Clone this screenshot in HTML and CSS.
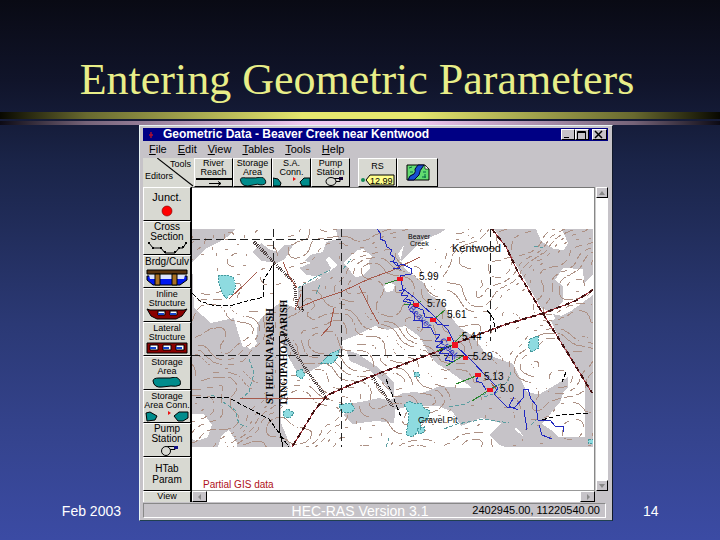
FILE: index.html
```html
<!DOCTYPE html>
<html lang="en">
<head>
<meta charset="utf-8">
<title>Entering Geometric Parameters</title>
<link rel="stylesheet" href="styles.css">
</head>
<body>
<main class="slide">
  <h1 class="title">Entering Geometric Parameters</h1>
  <div class="rule rule-gold"></div>
  <div class="rule rule-lilac"></div>
  <div class="stage">
    <section class="window">
      <header class="titlebar">
        <svg class="app-icon" width="6" height="6" viewBox="0 0 6 6"><path d="M3 0v6M1 3h4" stroke="#b01030" stroke-width="1.4"/></svg>
        <span class="caption">Geometric Data - Beaver Creek near Kentwood</span>
        <button class="ctl" aria-label="Minimize"><svg width="11" height="9" viewBox="0 0 11 9"><path d="M2 7.500h5" stroke="#000"/></svg></button>
        <button class="ctl" aria-label="Maximize"><svg width="11" height="9" viewBox="0 0 11 9"><path d="M1.500 9V1.500h8V9M1 2.500h9" fill="none" stroke="#000"/></svg></button>
        <button class="ctl close" aria-label="Close"><svg width="11" height="9" viewBox="0 0 11 9"><path d="M2 1l7 7M9 1L2 8" stroke="#000" stroke-width="1.500"/></svg></button>
      </header>
      <nav class="menu">
        <a href="#"><u>F</u>ile</a><a href="#"><u>E</u>dit</a><a href="#"><u>V</u>iew</a><a href="#"><u>T</u>ables</a><a href="#"><u>T</u>ools</a><a href="#"><u>H</u>elp</a>
      </nav>
      <div class="toolbar">
        <div class="corner">
          <svg class="slash" viewBox="0 0 50 29" preserveAspectRatio="none"><path d="M14 0L49 28" stroke="#000"/></svg>
          <span class="corner-tools">Tools</span><span class="corner-editors">Editors</span>
        </div>
        <button class="tool"><span>River<br>Reach</span><svg width="36" height="9" viewBox="0 0 36 9"><path d="M0 2h36" stroke="#000" stroke-width="2"/><path d="M13 6.500h12M22 4.500l3 2-3 2" fill="none" stroke="#000"/></svg></button>
        <button class="tool"><span>Storage<br>Area</span><svg width="32" height="9" viewBox="0 0 32 10"><path d="M2 3Q2 0 8 1L19 1 25 0Q31 2 30 7Q27 10 21 8L10 10Q3 10 2 3Z" fill="#008c8c" stroke="#000"/></svg></button>
        <button class="tool"><span>S.A.<br>Conn.</span><svg width="37" height="9" viewBox="0 0 37 9"><path d="M0 1l5 1 3 4-1 3H0ZM27 5l4-4h6v8h-8Z" fill="#008c8c" stroke="#000"/><path d="M20 0v4l3-2z" fill="#e11"/></svg></button>
        <button class="tool"><span>Pump<br>Station</span><svg width="30" height="9" viewBox="0 0 30 9"><path d="M15 1.500h9v3h-5" fill="none" stroke="#000"/><ellipse cx="15" cy="4.500" rx="5" ry="4" fill="#d8d9d2" stroke="#000"/><path d="M23 0h4v3h-4z" fill="#103"/></svg></button>
        <button class="tool rs"><span>RS</span><svg width="36" height="12" viewBox="0 0 36 12"><path d="M6 6l4-5h24v10H10Z" fill="#ffff8c" stroke="#000"/><circle cx="3" cy="6" r="2" fill="#185"/><text class="tag" x="10" y="10">12.99</text></svg></button>
        <button class="tool picture" aria-label="Background picture"><svg width="24" height="17" viewBox="0 0 24 17"><path d="M1 1h18l4 4v11H1Z" fill="#62dc70" stroke="#000"/><path d="M2 16Q3 11 8 10Q10 8 9 5L12 1h6Q13 7 13 11L8 16Z" fill="#164fd0" stroke="#003"/><path d="M19 1l4 4h-4Z" fill="#fff" stroke="#000" stroke-width=".6"/><path d="M3 4l3-1M4 8h3M17 8h3M16 13h4M19 10v4" stroke="#064"/></svg></button>
      </div>
      <div class="work">
        <div class="editors">
          <button class="edit"><span>Junct.</span><svg width="12" height="12" viewBox="0 0 12 12"><circle cx="6" cy="6" r="5" fill="#f00" stroke="#700" stroke-width=".6"/></svg></button>
          <button class="edit"><span>Cross<br>Section</span><svg width="42" height="12" viewBox="0 0 42 12"><path d="M3 1l4 5h8l4 5h10l4-5h4l3-5" fill="none" stroke="#000"/><path d="M2 0h2v2H2zM6 5h2v2H6zM14 5h2v2h-2zM18 9h2v2h-2zM28 9h2v2h-2zM32 5h2v2h-2zM36 4h2v2h-2zM39 0h2v2h-2z"/></svg></button>
          <button class="edit"><span>Brdg/Culv</span><svg width="42" height="17" viewBox="0 0 42 17"><path d="M1 7h40v4l-7 5H7L1 11Z" fill="#0018f0" stroke="#000"/><path d="M3 6h36l-1 4H4Z" fill="#dce4ff"/><path d="M1 1h40v4H1Z" fill="#5b3510" stroke="#000"/><path d="M9 5h5v11H9zM26 5h5v11h-5z" fill="#a97022" stroke="#000"/></svg></button>
          <button class="edit"><span class="small">Inline<br>Structure</span><svg width="42" height="12" viewBox="0 0 42 12"><path d="M1 1l3 1h34l3-1-5 7-6 3H11L5 8Z" fill="#8b0000" stroke="#000"/><path d="M12 3h7v4h-7zM24 3h7v4h-7z" fill="#fff" stroke="#000"/><path d="M12 5h6v2h-6zM24 5h6v2h-6z" fill="#14c"/></svg></button>
          <button class="edit"><span class="small">Lateral<br>Structure</span><svg width="42" height="12" viewBox="0 0 42 12"><path d="M1 1h40v10H1Z" fill="#8b0000" stroke="#000"/><path d="M4 3h8v5H4zM17 3h8v5h-8zM30 3h8v5h-8z" fill="#fff" stroke="#000"/><path d="M4 5h6v2H4zM17 5h6v2h-6zM30 5h6v2h-6z" fill="#14c"/></svg></button>
          <button class="edit"><span class="small">Storage<br>Area</span><svg width="32" height="11" viewBox="0 0 32 11"><path d="M2 4Q2 1 8 1L19 1 25 0Q31 3 29 8Q25 10 20 9L11 10Q3 11 2 4Z" fill="#008c8c" stroke="#000"/></svg></button>
          <button class="edit"><span class="small">Storage<br>Area Conn.</span><svg width="44" height="12" viewBox="0 0 44 12"><path d="M1 3l4-1 7 4-2 4-8 1ZM29 6l5-4h9v6l-5 3h-5Z" fill="#008c8c" stroke="#000"/><path d="M23 1v4l3-2z" fill="#e11"/></svg></button>
          <button class="edit"><span>Pump<br>Station</span><svg width="30" height="11" viewBox="0 0 30 11"><path d="M15 1.500h8v3h-5" fill="none" stroke="#000"/><circle cx="14" cy="6" r="4.500" fill="#d8d9d2" stroke="#000"/><path d="M22 1h4v3h-4z" fill="#118"/></svg></button>
          <button class="edit plain"><span>HTab<br>Param</span></button>
          <button class="edit last"><span class="small">View</span></button>
        </div>
        <div class="view">
          <div class="canvas">
            <svg class="map" viewBox="193 229 401 218" role="img" aria-label="Topographic map of Beaver Creek">
              <rect class="wood" x="193" y="229" width="401" height="218"/>
              <g class="open">
                <path d="M193 262l7-7 8-7 12-6 8-5 8-8h101l2 10-12 3-3 10-13 3-5 6 14 4 10-8 9 8-19 14-21 8v22l-17-7-18 14-5 7-3 24h-12l-5-14-4-15-23 5-17-15Z"/>
                <path d="M345 263l5-6 9-7 5-1 9 7-3 5 1 8-8 7-7 1Z"/>
                <path d="M401 262l12-12 10-9 18-8 6-4h48l13 20 34 59 10 4 12-10v-16l-8-6 8-12 20 1 1 14 9-8v20l-22 16-20 10 14 30 20 30v56H560l-8-7-9-6 18-22 8-22-9 6-14 10-18-4-14-28-27-10-13-18-14-9-11-14-6-11-13-8-4-10-20-15-7-15 6-9Z"/>
                <path d="M193 414h12l8 11-4 12-12 4-4-2ZM219 447l4-12 7-5 8 13v4ZM242 335h14l2 9-7 5-7-5Z"/>
                <path d="M343 341l15-6 18-9 12 4 18-4 14 10 9 16 8 11 13 8 22 16 8 12 14 7 10 14 14 8 8 10 4 9H292l-10-24V340l8 18 8 14 12 0 14-8 20-13Z"/>
                <path d="M537 229h26l6 14-4 7-10-1-13-8ZM385 286l6-4 5 3-2 6-7 1Z"/>
              </g>
              <g class="wood">
                <path d="M253 252l9-9 8 6 8 3 8-7 8 0-8 14-8 4-15-2Z"/>
                <path d="M312 263l14-5 6 10-8 9-16-2-8-7ZM302 367l20-14 20-6-8 14-20 4Z"/>
                <path d="M347 350l12 4 18 12 18 16 0 16-10-15-16-14-18-8Z"/>
                <path d="M350 404l17-3 13-3 17 4-2 21-18-2-24 3-8-9Z"/>
                <path d="M391 400l13-7 14-1 12 5 13 2 2 7-33 0-18 4ZM441 386l21 2 17 0 14 10 10 6 17-14 12 9 21-12 16-10 0 11-14 13-22 18-18 10 14 11 21 4 18 13h-28l-20-6-20-6-10-10 12-12-20-5-20 8-8-14-22-9-19-6Z"/>
                <path d="M434 353l13 6 16 15 9 12 15 13 21-8-8-9-9-14-13-10-8-6-15-12Z"/>
                <path d="M554 314l14 3 12 10 14 4v50l-16-22-14-26Z"/>
              </g>
              <path id="contours" class="contour"/>
              <g class="water">
                <path d="M219 275h7l8 2 3 9-3 8-4 1-2 4-5-6-3-10ZM322 363l10-10 8-3-1 7-5 6ZM298 371l5-2 3 6-3 4-6-3ZM284 412l5-3 6 4-4 5-6-1ZM340 405l12-2 4 6-5 4-9-1ZM405 405l5-4 7 3 5-1 3 5 6 3-2 8-7 3-1 8-8 7-6-2 2-12 1-10ZM418 429l7-2v5l-5 2ZM531 339l8-3 1 12-8 4-3-6ZM415 372l5 1v4l-5-1ZM590 439l4 1v4l-5-1Z"/>
              </g>
              <g class="brook">
                <path d="M344 269l8-10M317 294l5-11M299 288l14-9 18-9M450 407l16-3 20-10 18-12M445 429l13-5 28-5 24 4M250 359l5 14-5 19-7 6M224 402l12 8 4 14 8 3M485 397l12-4 12-12 3-9M387 447l3-9M532 425l5-5M535 246l9 2M212 395l12 4"/>
              </g>
              <g class="dash">
                <path d="M193 239.500H342M342.500 229V447M491.500 229V341M193 355.500H480M274.500 229V341"/>
              </g>
              <path class="parish-line" d="M274.500 263v50M280 336v92l4 19M303 286v24"/>
              <path class="parish-line trail" d="M193 293l8 8 12 4 17 1 22-6 13-3-1-16 10-16M197 397h31l42 22 20 28M387 379l15 38M567 372l-4 10M488 310l6 8 3 14M543 420l18-5 30-2"/>
              <g class="track">
                <path d="M255 242l13 13 11 12 16 15 3 24 7 5M284 332l14 24 13 19 18 25M372 375l22 32"/>
              </g>
              <path class="redroad" d="M241 398.500h88M300 308l15-7 27-9 30-14 20-7 29-14M230 299l17-16 11-11M492 383l6 7"/>
              <path class="redroad" d="M284 262l6 14 8 12M296 310l6-16M335 308l-4 18-9 10M360 286l12 24 8 14"/>
              <g class="road">
                <path class="road-base" d="M493 229l14 18 13 27 21 35 24 38 28 46M594 290l-18 11-31 12-37 11-38 14-38 16-51 19-30 12-22 10-14 16-12 20-10 16"/>
                <path class="road-ink" d="M493 229l14 18 13 27 21 35 24 38 28 46M594 290l-18 11-31 12-37 11-38 14-38 16-51 19-30 12-22 10-14 16-12 20-10 16"/>
              </g>
              <g class="green">
                <path d="M386 284l15-5M405 304l12 1 5-4M434 320l12-10M438 351l15-6 12-12M447 366l17-10M457 384l20-8M473 401l17-11 8-5"/>
              </g>
              <g class="stream">
                <path d="M378 229l4 5-1 5 5 2 2 6 5 3-2 4 5 4-2 4 4 4 6-2 3 2 6 3-1 5-11 2 3 13 11 8 9 9 9 8 16 16 8 16 16 15 14 15 12 12-4 6 13 13 8 0 8-9 1-9 4 0 3 10 5 6 2 15h12l5 6 8 0v6"/>
                <path d="M391 261l7 2 3 6-7-1M400 291l6-2-4 6 7 1-5 5 8 2-3 5M411 311l5 3-1 6 8 0 0 7 9 1 3 6 6 0M407 299l7 2 2 6 8 3 2 7 8 1 4 6 12 2M441 335l-5 6 8 1-7 5 10 1-7 5 10 1-4 6 9 2M449 350l4 4 1 6M479 376l-2 5 6 2 4 7M515 397l-5 9 9 4M525 410l3 20M540 425l3 10 10 4"/>
              </g>
              <g class="stations">
                <path d="M398 277h6v4h-6zM414 303h6v4h-6zM431 318h6v4h-6zM448 337h4v4h-4zM464 356h5v4h-5zM476 373h6v4h-6zM488 388h6v4h-6z"/><circle cx="456" cy="345" r="3.500"/>
              </g>
              <g class="map-text">
                <text class="town" x="453" y="252">Kentwood</text>
                <text class="tiny" x="409" y="239">Beaver</text><text class="tiny" x="411" y="246">Creek</text>
                <text x="420" y="280">5.99</text><text x="428" y="307">5.76</text><text x="448" y="318">5.61</text>
                <text x="463" y="340">5.44</text><text x="474" y="360">5.29</text><text x="485" y="380">5.13</text><text x="501" y="392">5.0</text>
                <text class="pit" x="419" y="423">Gravel Pit</text>
                <text class="creek" transform="translate(409 309) rotate(45)">Beaver</text>
                <text class="creek" transform="translate(440 341) rotate(50)">Creek</text>
                <text class="parish" transform="translate(274 404) rotate(-90)">ST HELENA PARISH</text>
                <text class="parish" transform="translate(288 406) rotate(-90)">TANGIPAHOA PARISH</text>
              </g>
            </svg>
            <span class="partial">Partial GIS data</span>
          </div>
          <div class="vbar"><button class="arrow" aria-label="Scroll up"><svg width="8" height="6" viewBox="0 0 8 6"><path d="M4 1l3 4H1z" fill="#888"/></svg></button><button class="arrow" aria-label="Scroll down"><svg width="8" height="6" viewBox="0 0 8 6"><path d="M1 1h6L4 5z" fill="#888"/></svg></button></div>
          <div class="hbar"><button class="arrow" aria-label="Scroll left"><svg width="6" height="8" viewBox="0 0 6 8"><path d="M4 1v6L1 4z" fill="#888"/></svg></button><button class="arrow" aria-label="Scroll right"><svg width="6" height="8" viewBox="0 0 6 8"><path d="M2 1v6l3-3z" fill="#888"/></svg></button></div>
        </div>
      </div>
      <div class="status"><span>2402945.00, 11220540.00</span></div>
    </section>
    <span class="foot date">Feb 2003</span>
    <span class="foot version">HEC-RAS Version 3.1</span>
    <span class="foot page">14</span>
  </div>
</main>
<script src="contours.js"></script>
</body>
</html>
```
FILE: styles.css
```css
* { box-sizing: border-box; }
body {
  margin: 0;
  font-family: "Liberation Sans", Arial, sans-serif;
  font-size: 10px;
  color: #000;
}
.slide {
  display: flex;
  flex-direction: column;
  min-height: 100vh;
  background: linear-gradient(#090a14 0%, #10142a 15%, #1a2448 30%, #2b3975 60%, #35448f 82%, #3b4ba4 100%);
}
.title {
  margin: 0;
  padding: 54px 6px 7px 0;
  font: 44px/51px "Liberation Serif", "Times New Roman", serif;
  text-align: center;
  color: #e8ee88;
}
.rule-gold {
  height: 7px;
  background: linear-gradient(90deg, #080800, #68692f 12%, #e4e66e 42%, #e4e66e 58%, #68692f 88%, #080800);
}
.rule-lilac {
  height: 4px;
  margin-top: 2px;
  background: linear-gradient(90deg, #0c0a14, #756378 12%, #efc8f0 42%, #efc8f0 58%, #756378 88%, #0c0a14);
}
.stage {
  display: grid;
  grid-template-columns: 139fr 474fr 107fr;
}
.window {
  grid-area: 1 / 2;
  min-width: 0;
  padding: 2px 4px 2px 3px;
  background: #c6c3c8;
  border: 1px solid #e8f4f4;
  border-right-color: #101828;
  border-bottom-color: #204050;
}
button {
  margin: 0;
  padding: 0;
  font: inherit;
  color: inherit;
  background: #d8d9d2;
  border: 1px solid #fff;
  border-right-color: #000;
  border-bottom-color: #000;
  border-radius: 0;
}
button svg { display: block; flex: none; }
.titlebar {
  display: flex;
  align-items: center;
  height: 13px;
  padding: 0 1px 0 5px;
  background: #000084;
  color: #fff;
}
.app-icon { margin-right: 9px; }
.caption {
  flex: 1;
  overflow: hidden;
  white-space: nowrap;
  font: bold 12px/13px "Liberation Sans", Arial, sans-serif;
}
.ctl { width: 14px; height: 11px; background: #c6c3c8; }
.close { width: 15px; margin-left: 3px; }
.menu {
  display: flex;
  gap: 11px;
  height: 17px;
  padding: 0 6px;
  font-size: 11px;
  line-height: 17px;
}
.menu a { color: inherit; text-decoration: none; }
.toolbar { display: flex; height: 29px; font-size: 9px; line-height: 9px; }
.corner { position: relative; width: 51px; background: #d8d9d2; }
.slash { position: absolute; inset: 0; width: 100%; height: 100%; }
.corner-tools { position: absolute; top: 2px; right: 3px; }
.corner-editors { position: absolute; bottom: 6px; left: 2px; }
.tool {
  display: flex;
  flex-direction: column;
  align-items: center;
  justify-content: space-between;
  width: 39px;
  overflow: hidden;
}
.rs { margin-left: 8px; padding-top: 3px; }
.picture { width: 41px; justify-content: center; }
.tag { font-size: 9px; }
.work { display: flex; height: 315px; }
.editors {
  display: grid;
  grid-template-rows: repeat(9, 1fr) 11px;
  width: 49px;
  border-right: 1px solid #000;
}
.edit {
  display: flex;
  flex-direction: column;
  align-items: center;
  justify-content: space-between;
  min-height: 0;
  padding: 1px 0;
  overflow: hidden;
  line-height: 10px;
}
.edit:first-child { padding: 4px 0 3px; font-size: 11px; }
.edit:nth-child(2), .edit:nth-child(8) { padding: 0; }
.edit .small { font-size: 9px; line-height: 9px; }
.edit.plain { justify-content: center; line-height: 11px; }
.edit.last { padding: 0; border-bottom: 0; }
.view {
  display: grid;
  flex: 1;
  grid-template: 1fr 11px / 1fr 13px;
  min-width: 0;
}
.canvas {
  display: flex;
  flex-direction: column;
  justify-content: space-between;
  padding: 41px 1px 0 0;
  min-width: 0;
  background: #fff;
  border-top: 1px solid #777;
  border-right: 1px solid #888;
  border-bottom: 1px solid #999;
}
.map { display: block; width: 100%; height: auto; shape-rendering: crispEdges; }
.partial { padding-left: 11px; color: #b01020; line-height: 10px; }
.vbar, .hbar { display: flex; justify-content: space-between; background: #fff; }
.vbar { flex-direction: column; border-left: 1px solid #ccc; }
.arrow {
  display: flex;
  align-items: center;
  justify-content: center;
  width: 100%;
  height: 11px;
  background: #c6c3c8;
}
.hbar .arrow { width: 15px; }
.status {
  height: 15px;
  margin: 1px 2px 0 0;
  padding-right: 5px;
  border: 1px solid;
  border-color: #888 #fff #fff #888;
  text-align: right;
  font-size: 11px;
  line-height: 13px;
}
.foot {
  align-self: end;
  margin-bottom: 1px;
  font-size: 14px;
  line-height: 18px;
  color: #fff;
}
.date { grid-area: 1 / 1; justify-self: end; margin-right: 18px; }
.version { grid-area: 1 / 2; justify-self: center; margin-right: 32px; }
.page { grid-area: 1 / 3; justify-self: start; margin-left: 30px; }

.wood { fill: #c6c3c8; }
.open { fill: #fff; }
.contour { fill: none; stroke: #ad9185; stroke-width: 1; }
.water { fill: #8edbe0; stroke: #45989d; stroke-width: 1; stroke-dasharray: 2 1; }
.brook { fill: none; stroke: #5a9da0; stroke-dasharray: 4 2; }
.dash { fill: none; stroke: #222; stroke-dasharray: 8 4; }
.parish-line { fill: none; stroke: #000; stroke-width: 1; }
.trail { stroke-dasharray: 5 2; }
.track { fill: none; stroke: #4c4040; stroke-width: 3; stroke-dasharray: 1 1; }
.redroad { fill: none; stroke: #a65a4c; }
.road { fill: none; }
.road-base { stroke: #9b3038; stroke-width: 1; }
.road-ink { stroke: #411; stroke-width: 2; stroke-dasharray: 5 4; }
.green { fill: none; stroke: #298529; }
.stream { fill: none; stroke: #2028c0; }
.stations { fill: #f01020; }
.map-text { font-size: 10px; }
.town { font-size: 11px; }
.tiny { font-size: 7px; }
.pit { font-size: 9px; }
.creek { font-size: 9px; fill: #2028c0; }
.parish { font-family: "Liberation Serif", serif; font-size: 10px; font-weight: bold; }
```
FILE: contours.js
```js
// Traces elevation contours over the map with marching squares.
(function () {
  var X0 = 193, Y0 = 229, W = 401, H = 218, STEP = 3;
  function height(x, y) {
    return 3.2 * Math.sin(x / 31 + 1.5 * Math.sin(y / 37)) +
      2.8 * Math.cos(y / 24 + 1.3 * Math.sin(x / 43)) +
      0.8 * Math.sin((x + y) / 9) + 0.6 * Math.cos((x - 2 * y) / 13);
  }
  function cross(ax, ay, av, bx, by, bv, level) {
    var t = (level - av) / (bv - av);
    return Math.round(ax + (bx - ax) * t) + " " + Math.round(ay + (by - ay) * t);
  }
  var d = "", n = 0;
  for (var y = Y0; y < Y0 + H; y += STEP) {
    for (var x = X0; x < X0 + W; x += STEP) {
      var c = [[x, y], [x + STEP, y], [x + STEP, y + STEP], [x, y + STEP]];
      var v = c.map(function (p) { return height(p[0], p[1]); });
      for (var level = -7; level <= 7; level += 1.5) {
        var pts = [];
        for (var i = 0; i < 4; i++) {
          var j = (i + 1) % 4;
          if ((v[i] < level) !== (v[j] < level)) {
            pts.push(cross(c[i][0], c[i][1], v[i], c[j][0], c[j][1], v[j], level));
          }
        }
        n = (n * 31 + 17) % 101;
        if (pts.length >= 2 && n > 32) d += "M" + pts[0] + "L" + pts[1];
      }
    }
  }
  document.getElementById("contours").setAttribute("d", d);
})();
```
